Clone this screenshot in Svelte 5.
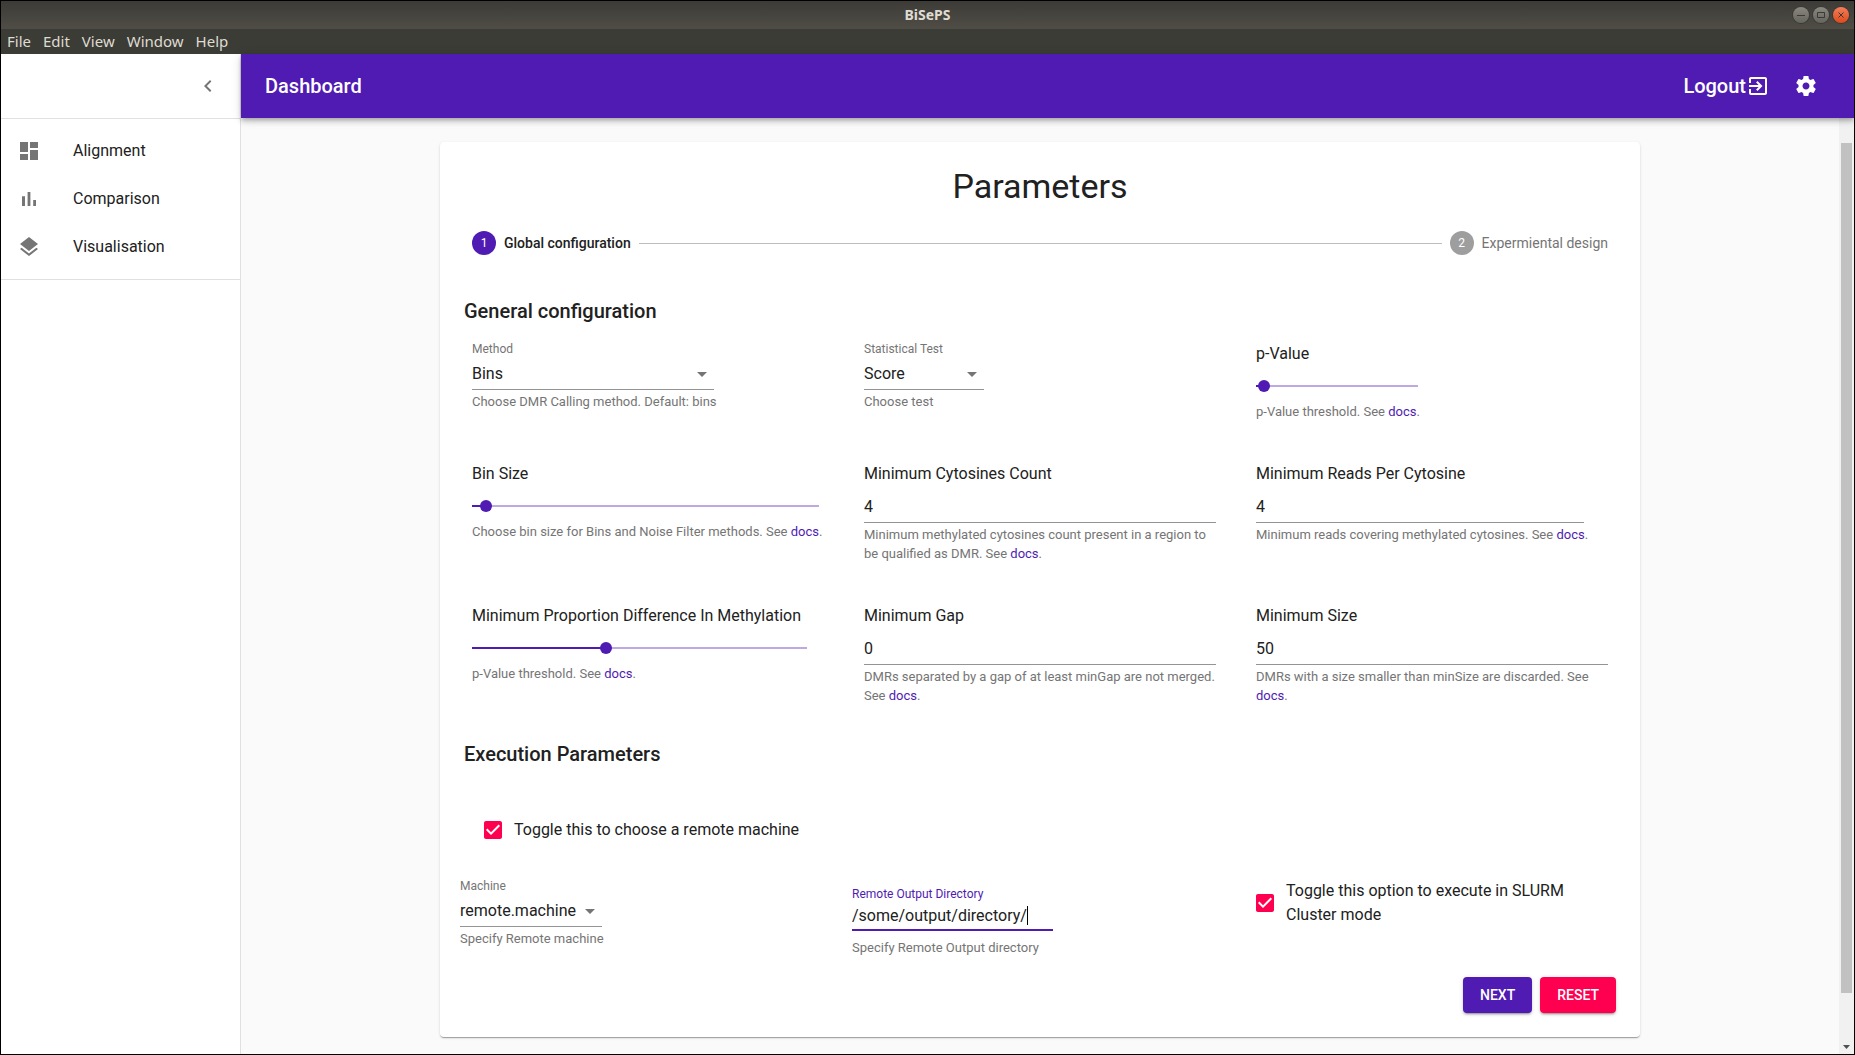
<script>
  const menus = ['File', 'Edit', 'View', 'Window', 'Help'];

  const links = [
    { label: 'Alignment', path: 'M3 13h8V3H3v10zm0 8h8v-6H3v6zm10 0h8V11h-8v10zm0-18v6h8V3h-8z' },
    { label: 'Comparison', path: 'M5 9.2h3V19H5zM10.6 5h2.8v14h-2.8zm5.6 8H19v6h-2.8z' },
    {
      label: 'Visualisation',
      path: 'M11.99 18.54l-7.37-5.73L3 14.07l9 7 9-7-1.63-1.27-7.38 5.74zM12 16l7.36-5.73L21 9l-9-7-9 7 1.63 1.27L12 16z'
    }
  ];

  let method = $state('Bins');
  let test = $state('Score');
  let machine = $state('remote.machine');
  let pValue = $state(5);
  let binSize = $state(4);
  let proportion = $state(40);
  let cytosines = $state('4');
  let reads = $state('4');
  let gap = $state('0');
  let size = $state('50');
  let directory = $state('/some/output/directory/');
  let remote = $state(true);
  let slurm = $state(true);
</script>

{#snippet icon(path)}
  <svg class="icon" viewBox="0 0 24 24" aria-hidden="true"><path d={path} /></svg>
{/snippet}

{#snippet tick(on)}
  {@render icon(
    on
      ? 'M19 3H5c-1.11 0-2 .9-2 2v14c0 1.1.89 2 2 2h14c1.11 0 2-.9 2-2V5c0-1.1-.89-2-2-2zm-9 14l-5-5 1.41-1.41L10 14.17l7.59-7.59L19 8l-9 9z'
      : 'M19 5v14H5V5h14m0-2H5c-1.1 0-2 .9-2 2v14c0 1.1.9 2 2 2h14c1.1 0 2-.9 2-2V5c0-1.1-.9-2-2-2z'
  )}
{/snippet}

<div class="window">
  <header class="titlebar">
    <span class="caption-title">BiSePS</span>
    <div class="controls">
      <button class="control" aria-label="Minimise">
        <svg viewBox="0 0 16 16"><path d="M4 8.5h8" /></svg>
      </button>
      <button class="control" aria-label="Maximise">
        <svg viewBox="0 0 16 16"><path d="M4.5 5.5h7v5h-7z" /></svg>
      </button>
      <button class="control close" aria-label="Close">
        <svg viewBox="0 0 16 16"><path d="M5.5 5.5l5 5M10.5 5.5l-5 5" /></svg>
      </button>
    </div>
  </header>

  <nav class="menubar" aria-label="Application menu">
    {#each menus as menu}
      <button>{menu}</button>
    {/each}
  </nav>

  <div class="app">
    <aside class="drawer">
      <div class="drawer-head">
        <button class="icon-button" aria-label="Collapse menu">
          {@render icon('M15.41 7.41L14 6l-6 6 6 6 1.41-1.41L10.83 12z')}
        </button>
      </div>
      <nav class="links" aria-label="Pages">
        {#each links as link}
          <a href="#{link.label.toLowerCase()}">
            {@render icon(link.path)}
            <span>{link.label}</span>
          </a>
        {/each}
      </nav>
    </aside>

    <div class="page">
      <header class="appbar">
        <h1>Dashboard</h1>
        <button class="logout">
          Logout
          {@render icon(
            'M10.09 15.59L11.5 17l5-5-5-5-1.41 1.41L12.67 11H3v2h9.67l-2.58 2.59zM19 3H5c-1.11 0-2 .9-2 2v4h2V5h14v14H5v-4H3v4c0 1.1.89 2 2 2h14c1.1 0 2-.9 2-2V5c0-1.1-.9-2-2-2z'
          )}
        </button>
        <button class="icon-button" aria-label="Settings">
          {@render icon(
            'M19.43 12.98c.04-.32.07-.64.07-.98s-.03-.66-.07-.98l2.11-1.65c.19-.15.24-.42.12-.64l-2-3.46c-.12-.22-.39-.3-.61-.22l-2.49 1c-.52-.4-1.08-.73-1.69-.98l-.38-2.65C14.46 2.18 14.25 2 14 2h-4c-.25 0-.46.18-.49.42l-.38 2.65c-.61.25-1.17.59-1.69.98l-2.49-1c-.23-.09-.49 0-.61.22l-2 3.46c-.13.22-.07.49.12.64l2.11 1.65c-.04.32-.07.65-.07.98s.03.66.07.98l-2.11 1.65c-.19.15-.24.42-.12.64l2 3.46c.12.22.39.3.61.22l2.49-1c.52.4 1.08.73 1.69.98l.38 2.65c.03.24.24.42.49.42h4c.25 0 .46-.18.49-.42l.38-2.65c.61-.25 1.17-.59 1.69-.98l2.49 1c.23.09.49 0 .61-.22l2-3.46c.12-.22.07-.49-.12-.64l-2.11-1.65zM12 15.5c-1.93 0-3.5-1.57-3.5-3.5s1.57-3.5 3.5-3.5 3.5 1.57 3.5 3.5-1.57 3.5-3.5 3.5z'
          )}
        </button>
      </header>

      <div class="scroller">
        <main>
          <form class="card" onsubmit={(e) => e.preventDefault()}>
            <h2>Parameters</h2>

            <ol class="stepper">
              <li class="active"><span class="dot">1</span>Global configuration</li>
              <li class="connector" aria-hidden="true"></li>
              <li><span class="dot">2</span>Expermiental design</li>
            </ol>

            <h3>General configuration</h3>
            <div class="grid">
              <div class="field method">
                <label class="small" for="method">Method</label>
                <div class="select">
                  <select id="method" bind:value={method}>
                    <option>Bins</option>
                    <option>Neighbourhood</option>
                    <option>Noise Filter</option>
                  </select>
                  {@render icon('M7 10l5 5 5-5z')}
                </div>
                <p class="line">Choose DMR Calling method. Default: bins</p>
              </div>
              <div class="field test">
                <label class="small" for="test">Statistical Test</label>
                <div class="select">
                  <select id="test" bind:value={test}>
                    <option>Score</option>
                    <option>Fisher</option>
                  </select>
                  {@render icon('M7 10l5 5 5-5z')}
                </div>
                <p class="line">Choose test</p>
              </div>
              <div class="field pvalue">
                <label for="pvalue">p-Value</label>
                <input id="pvalue" type="range" bind:value={pValue} style:--value={pValue / 100} />
                <p class="line">p-Value threshold. See <a href="#docs">docs</a>.</p>
              </div>

              <div class="field binsize">
                <label for="binsize">Bin Size</label>
                <input id="binsize" type="range" bind:value={binSize} style:--value={binSize / 100} />
                <p class="line">Choose bin size for Bins and Noise Filter methods. See <a href="#docs">docs</a>.</p>
              </div>
              <div class="field">
                <label for="cytosines">Minimum Cytosines Count</label>
                <input id="cytosines" type="text" inputmode="numeric" bind:value={cytosines} />
                <p>
                  Minimum methylated cytosines count present in a region to be qualified as DMR. See
                  <a href="#docs">docs</a>.
                </p>
              </div>
              <div class="field reads">
                <label for="reads">Minimum Reads Per Cytosine</label>
                <input id="reads" type="text" inputmode="numeric" bind:value={reads} />
                <p class="line">Minimum reads covering methylated cytosines. See <a href="#docs">docs</a>.</p>
              </div>

              <div class="field proportion">
                <label for="proportion">Minimum Proportion Difference In Methylation</label>
                <input id="proportion" type="range" bind:value={proportion} style:--value={proportion / 100} />
                <p class="line">p-Value threshold. See <a href="#docs">docs</a>.</p>
              </div>
              <div class="field">
                <label for="gap">Minimum Gap</label>
                <input id="gap" type="text" inputmode="numeric" bind:value={gap} />
                <p>DMRs separated by a gap of at least minGap are not merged. See <a href="#docs">docs</a>.</p>
              </div>
              <div class="field">
                <label for="size">Minimum Size</label>
                <input id="size" type="text" inputmode="numeric" bind:value={size} />
                <p>DMRs with a size smaller than minSize are discarded. See <a href="#docs">docs</a>.</p>
              </div>
            </div>

            <h3 class="second">Execution Parameters</h3>
            <label class="check remote">
              <input type="checkbox" bind:checked={remote} />
              {@render tick(remote)}
              <span>Toggle this to choose a remote machine</span>
            </label>

            <div class="grid execution">
              <div class="field machine">
                <label class="small" for="machine">Machine</label>
                <div class="select">
                  <select id="machine" bind:value={machine}>
                    <option>remote.machine</option>
                  </select>
                  {@render icon('M7 10l5 5 5-5z')}
                </div>
                <p class="line">Specify Remote machine</p>
              </div>
              <div class="field directory">
                <label class="small" for="directory">Remote Output Directory</label>
                <div class="typing">
                  <input id="directory" type="text" bind:value={directory} />
                  <span class="caret"></span>
                </div>
                <p class="line">Specify Remote Output directory</p>
              </div>
              <label class="check slurm">
                <input type="checkbox" bind:checked={slurm} />
                {@render tick(slurm)}
                <span>Toggle this option to execute in SLURM Cluster mode</span>
              </label>
            </div>

            <div class="actions">
              <button class="next" type="submit">NEXT</button>
              <button class="reset" type="reset">RESET</button>
            </div>
          </form>
        </main>
        <div class="scrollbar" aria-hidden="true">
          <div class="thumb"></div>
          <svg viewBox="0 0 15 15"><path d="M4 6h7l-3.5 4z" /></svg>
        </div>
      </div>
    </div>
  </div>
</div>

<style>
  :global(body) {
    margin: 0;
  }

  * {
    box-sizing: border-box;
  }

  .window {
    --primary: #4f1bb3;
    --accent: #ff0051;
    --ink: #212121;
    --muted: #757575;
    --line: #e0e0e0;
    display: flex;
    flex-direction: column;
    min-height: 100vh;
    border: 1px solid #000;
    background: #fafafa;
    color: var(--ink);
    font: 400 16px/24px Roboto, 'Liberation Sans', sans-serif;
  }

  button,
  input,
  select {
    margin: 0;
    padding: 0;
    border: 0;
    background: none;
    color: inherit;
    font: inherit;
  }

  h1,
  h2,
  h3,
  p {
    margin: 0;
  }

  .icon {
    flex: none;
    width: 24px;
    height: 24px;
    fill: currentColor;
  }

  /* Desktop window frame */
  .titlebar {
    display: grid;
    grid-template-columns: 1fr auto 1fr;
    align-items: center;
    height: 28px;
    padding: 0 5px;
    background: linear-gradient(#3c3b37, #504d46);
    color: #dfdbd2;
    font: 700 14px/28px 'Noto Sans', sans-serif;
  }

  .caption-title {
    grid-column: 2;
  }

  .controls {
    display: flex;
    justify-content: flex-end;
    gap: 4px;
  }

  .control {
    width: 16px;
    height: 16px;
    border-radius: 50%;
    background: linear-gradient(#8a8880, #65645d);
    box-shadow: 0 0 0 1px #3a3935;
  }

  .control svg {
    display: block;
    fill: none;
    stroke: #3a3935;
  }

  .control.close {
    background: linear-gradient(#f37e5a, #df4a1a);
  }

  .menubar {
    display: flex;
    gap: 12px;
    height: 25px;
    padding: 0 6px;
    background: #3c3c36;
    color: #dfdbd2;
    font: 400 15px/25px 'Noto Sans', sans-serif;
  }

  /* Drawer */
  .app {
    display: flex;
    flex: 1;
  }

  .drawer {
    flex: none;
    width: 240px;
    border-right: 1px solid var(--line);
    background: #fff;
  }

  .drawer-head {
    display: flex;
    align-items: center;
    justify-content: flex-end;
    height: 65px;
    padding-right: 8px;
    border-bottom: 1px solid var(--line);
    color: var(--muted);
  }

  .icon-button {
    display: flex;
    padding: 12px;
  }

  .links {
    padding: 8px 0;
    border-bottom: 1px solid var(--line);
  }

  .links a {
    display: flex;
    align-items: center;
    gap: 32px;
    height: 48px;
    padding: 0 16px;
    color: var(--ink);
    text-decoration: none;
  }

  .links .icon {
    color: var(--muted);
  }

  /* Page */
  .page {
    display: flex;
    flex: 1;
    flex-direction: column;
    min-width: 0;
  }

  .appbar {
    z-index: 1;
    display: flex;
    align-items: center;
    height: 64px;
    padding: 0 24px;
    background: var(--primary);
    box-shadow:
      0 2px 4px -1px rgba(0, 0, 0, 0.2),
      0 4px 5px rgba(0, 0, 0, 0.14),
      0 1px 10px rgba(0, 0, 0, 0.12);
    color: #fff;
  }

  h1 {
    flex: 1;
    font-size: 20px;
    font-weight: 500;
    line-height: 32px;
  }

  .logout {
    display: flex;
    align-items: center;
    padding: 12px;
    font-size: 20px;
    font-weight: 500;
  }

  .scroller {
    display: flex;
    flex: 1;
  }

  main {
    flex: 1;
    min-width: 0;
    padding: 24px 24px 15px;
  }

  .card {
    max-width: 1200px;
    margin: 0 auto;
    padding: 24px;
    border-radius: 4px;
    background: #fff;
    box-shadow:
      0 2px 1px -1px rgba(0, 0, 0, 0.2),
      0 1px 1px rgba(0, 0, 0, 0.14),
      0 1px 3px rgba(0, 0, 0, 0.12);
  }

  h2 {
    font-size: 34px;
    font-weight: 400;
    line-height: 41px;
    text-align: center;
  }

  .stepper {
    display: flex;
    align-items: center;
    gap: 8px;
    margin: 0;
    padding: 24px 8px 40px;
    color: var(--muted);
    font-size: 14px;
    list-style: none;
  }

  .stepper li {
    display: flex;
    align-items: center;
    gap: 8px;
  }

  .stepper .active {
    color: var(--ink);
    font-weight: 500;
  }

  .stepper .connector {
    flex: 1;
    height: 1px;
    background: #bdbdbd;
  }

  .dot {
    width: 24px;
    height: 24px;
    border-radius: 50%;
    background: #9e9e9e;
    color: #fff;
    font-size: 12px;
    font-weight: 400;
    text-align: center;
  }

  .active .dot {
    background: var(--primary);
  }

  h3 {
    margin-bottom: 15px;
    font-size: 20px;
    font-weight: 500;
    line-height: 32px;
  }

  h3.second {
    margin: 33px 0 39px;
  }

  /* Form fields */
  .grid {
    display: grid;
    grid-template-columns: repeat(3, minmax(0, 1fr));
    align-items: start;
    gap: 41px 24px;
  }

  .field {
    display: flex;
    flex-direction: column;
    max-width: 368px;
    padding: 0 8px;
  }

  .binsize {
    max-width: 363px;
  }

  .proportion {
    max-width: 351px;
  }

  .reads {
    max-width: 344px;
  }

  .method {
    max-width: 258px;
  }

  .pvalue {
    max-width: 178px;
  }

  .test {
    max-width: 136px;
  }

  label.small {
    color: var(--muted);
    font-size: 12px;
    line-height: 14px;
    white-space: nowrap;
  }

  .field p {
    margin-top: 2px;
    color: var(--muted);
    font-size: 13px;
    line-height: 19px;
  }

  .field p.line {
    white-space: nowrap;
  }

  .field a {
    color: var(--primary);
    text-decoration: none;
  }

  .select {
    position: relative;
    border-bottom: 1px solid #949494;
  }

  .select select {
    display: block;
    width: 100%;
    height: 33px;
    padding: 2px 24px 0 0;
    appearance: none;
  }

  .select .icon {
    position: absolute;
    top: 6px;
    right: 0;
    color: var(--muted);
    pointer-events: none;
  }

  input[type='text'] {
    height: 37px;
    padding-top: 5px;
    border-bottom: 1px solid #949494;
    outline: 0;
  }

  input[type='range'] {
    width: calc(100% + 12px);
    height: 28px;
    margin: 6px -6px 0;
    appearance: none;
    background:
      linear-gradient(var(--primary), var(--primary)) 6px 50% / calc((100% - 12px) * var(--value)) 2px no-repeat,
      linear-gradient(#bfa9e3, #bfa9e3) 6px 50% / calc(100% - 12px) 2px no-repeat;
  }

  input[type='range']::-webkit-slider-thumb {
    width: 12px;
    height: 12px;
    border-radius: 50%;
    appearance: none;
    background: var(--primary);
  }

  .check {
    display: flex;
    position: relative;
    align-items: center;
    gap: 9px;
  }

  .check input {
    position: absolute;
    width: 24px;
    height: 24px;
    opacity: 0;
  }

  .check .icon {
    color: var(--accent);
  }

  .remote {
    width: fit-content;
    height: 42px;
    margin: 0 0 28px 17px;
  }

  .execution {
    margin: 0 4px 0 -4px;
  }

  .execution .field {
    padding: 0;
  }

  .machine {
    max-width: 142px;
  }

  .directory {
    max-width: 201px;
    margin-top: 8px;
  }

  .directory label {
    color: var(--primary);
  }

  .typing {
    display: flex;
    align-items: center;
    height: 30px;
    border-bottom: 2px solid var(--primary);
  }

  .typing input[type='text'] {
    field-sizing: content;
    height: 27px;
    padding: 0;
    border: 0;
  }

  .caret {
    width: 1px;
    height: 19px;
    background: #000;
  }

  .directory p {
    margin-top: 7px;
  }

  .slurm {
    padding-left: 9px;
  }

  .actions {
    display: flex;
    justify-content: flex-end;
    gap: 8px;
    margin-top: 20px;
  }

  .actions button {
    height: 36px;
    padding: 0 17px;
    border-radius: 4px;
    box-shadow:
      0 3px 1px -2px rgba(0, 0, 0, 0.2),
      0 2px 2px rgba(0, 0, 0, 0.14),
      0 1px 5px rgba(0, 0, 0, 0.12);
    color: #fff;
    font-size: 14px;
    font-weight: 500;
  }

  .next {
    background: var(--primary);
  }

  .actions .reset {
    background: var(--accent);
  }

  .scrollbar {
    display: flex;
    flex: none;
    flex-direction: column;
    align-items: center;
    width: 15px;
    padding-top: 25px;
    background: #f1f1f1;
  }

  .thumb {
    flex: 1;
    width: 11px;
    margin-bottom: 46px;
    background: #c1c1c1;
  }

  .scrollbar svg {
    width: 15px;
    height: 15px;
    fill: #505050;
  }
</style>
